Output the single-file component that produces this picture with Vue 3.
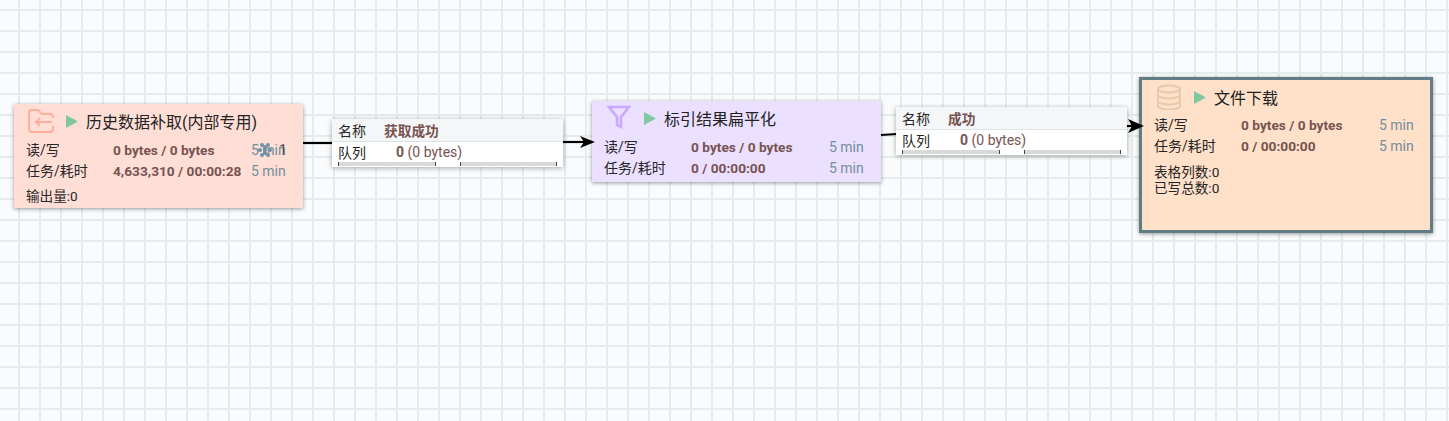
<script setup>
const edges = [
  { d: 'M303 143 L333 143' },
  { d: 'M563 142 L587 142', head: '595,142 580,136 584,142 580,148' },
  { d: 'M881 135 L897 134' },
  { d: 'M1127 126 L1136 126', head: '1144,126 1128,119 1132,126 1128,133' }
]
const nodes = [
  {
    cls: 'n1', kind: 'folder', title: '历史数据补取(内部专用)',
    task: '4,633,310 / 00:00:28', extras: ['输出量:0'], spinner: true
  },
  { cls: 'n2', kind: 'filter', title: '标引结果扁平化', task: '0 / 00:00:00', extras: [] },
  { cls: 'n3', kind: 'db', title: '文件下载', task: '0 / 00:00:00', extras: ['表格列数:0', '已写总数:0'] }
]
const labels = [
  { cls: 'l1', name: '获取成功' },
  { cls: 'l2', name: '成功' }
]
const dots = [[-3, -5], [3, -5], [-5, 0], [0, 0], [5, 0], [-3, 5], [3, 5], [0, -3], [0, 3]]
</script>

<template>
  <main class="canvas">
    <section v-for="n in nodes" :key="n.cls" class="node" :class="n.cls">
      <header class="head">
        <svg class="icon" viewBox="0 0 28 26" width="28" height="26" fill="none" stroke-width="2">
          <template v-if="n.kind === 'folder'">
            <path stroke="#ffae9c" d="M26 10V9a3 3 0 0 0-3-3h-8l-4-4H5a3 3 0 0 0-3 3v16a3 3 0 0 0 3 3h18a3 3 0 0 0 3-3v-3" />
            <path stroke="#ffae9c" d="M25 14H9M13 10l-4 4 4 4" />
          </template>
          <template v-else-if="n.kind === 'filter'">
            <path stroke="#c9a8ff" stroke-width="2.6" d="M4 2h20l-8 10v10l-4-2v-8Z" />
          </template>
          <template v-else>
            <ellipse cx="14" cy="5" rx="11" ry="3.5" stroke="#e7c9ae" />
            <path stroke="#e7c9ae" d="M3 5v17c0 2 5 3.5 11 3.5S25 24 25 22V5M3 11c0 2 5 3.5 11 3.5S25 13 25 11M3 17c0 2 5 3.5 11 3.5S25 19 25 17" />
          </template>
        </svg>
        <svg class="play" viewBox="0 0 12 13" width="12" height="13"><polygon points="0,0 12,6.5 0,13" fill="#7fc8a0" /></svg>
        <span class="title">{{ n.title }}</span>
      </header>
      <div class="stats">
        <span>读/写</span><b>0 bytes / 0 bytes</b><span class="time">5 min</span>
        <span>任务/耗时</span><b>{{ n.task }}</b><span class="time">5 min</span>
      </div>
      <div v-if="n.extras.length" class="extras">
        <div v-for="x in n.extras" :key="x">{{ x }}</div>
      </div>
      <div v-if="n.spinner" class="badge">
        <svg width="16" height="16" viewBox="-8 -8 16 16">
          <circle v-for="(p, i) in dots" :key="i" :cx="p[0]" :cy="p[1]" r="2" fill="#6f92a8" />
        </svg>
        <span>1</span>
      </div>
    </section>

    <svg class="edges" width="1449" height="421">
      <g v-for="(e, i) in edges" :key="i">
        <path :d="e.d" stroke="#000" stroke-width="2.2" fill="none" />
        <polygon v-if="e.head" :points="e.head" fill="#000" />
      </g>
    </svg>

    <section v-for="l in labels" :key="l.cls" class="label" :class="l.cls">
      <div class="lrow top"><span class="lkey">名称</span><b class="lname">{{ l.name }}</b></div>
      <div class="lrow body"><span class="lkey">队列</span><span class="lval"><b>0</b> (0 bytes)</span></div>
      <div class="bars"><i></i><i></i></div>
    </section>
  </main>
</template>

<style>
html, body { margin: 0; background: #f9fbfd; }
</style>

<style scoped>
.canvas {
  position: relative;
  width: 1449px;
  height: 421px;
  overflow: hidden;
  font-family: Roboto, "Noto Sans CJK SC", sans-serif;
  font-size: 14px;
  color: #262626;
  background-color: #f9fbfd;
  background-image:
    linear-gradient(to right, #e5ecee 2px, transparent 2px),
    linear-gradient(to bottom, #e5ecee 2px, transparent 2px);
  background-size: 21px 21px;
  background-position: 18px 9px;
}
.edges { position: absolute; left: 0; top: 0; }
.node {
  position: absolute;
  box-sizing: border-box;
  padding: 3px 12px 0;
  box-shadow: 0 1px 4px rgba(0, 0, 0, .4);
}
.n1 { left: 14px; top: 104px; width: 289px; height: 104px; background: #ffded6; }
.n2 { left: 592px; top: 101px; width: 289px; height: 81px; background: #ebe0ff; }
.n3 {
  left: 1139px; top: 77px; width: 294px; height: 156px;
  background: #ffe0c8;
  border: 3px solid #607d86;
}
.head { display: flex; align-items: center; height: 28px; }
.icon { margin-left: 1px; flex: none; }
.play { margin-left: 11px; flex: none; }
.title { margin-left: 8px; font-size: 16px; color: #222; white-space: nowrap; }
.stats {
  display: grid;
  grid-template-columns: 87px 138px auto;
  grid-auto-rows: 20.5px;
  align-items: center;
  margin-top: 5px;
  line-height: 20px;
  white-space: nowrap;
}
.n3 .stats { margin-top: 4px; }
.stats b { color: #775351; font-weight: 700; font-size: 13.7px; }
.time { color: #728e9b; }
.extras { margin-top: 8px; line-height: 16px; font-size: 13.6px; }
.n1 .extras { margin-top: 7px; }
.badge {
  position: absolute;
  left: 243px;
  top: 38px;
  display: flex;
  align-items: center;
  gap: 6px;
  height: 16px;
  color: #444;
}
.label {
  position: absolute;
  width: 231px;
  height: 48px;
  background: #fff;
  box-shadow: 0 1px 5px rgba(0, 0, 0, .35);
  overflow: hidden;
}
.l1 { left: 332px; top: 119px; }
.l2 { left: 896px; top: 107px; }
.lrow { display: flex; align-items: center; height: 20px; padding-left: 6px; white-space: nowrap; }
.top { height: 22px; background: #f4f6f7; border-bottom: 1px solid #dbe3e6; }
.body { height: 19px; padding-bottom: 1px; }
.lkey { width: 46px; flex: none; }
.lname { color: #775351; font-weight: 700; font-size: 13.7px; }
.lval { margin-left: 12px; color: #775351; }
.lval b { font-weight: 700; }
.bars {
  display: flex;
  gap: 24px;
  padding: 0 6px;
}
.bars i {
  display: block;
  box-sizing: border-box;
  width: 98px;
  height: 4px;
  background: #d9d9d9;
  border-left: 1px solid #444;
  border-right: 1px solid #444;
}
</style>
